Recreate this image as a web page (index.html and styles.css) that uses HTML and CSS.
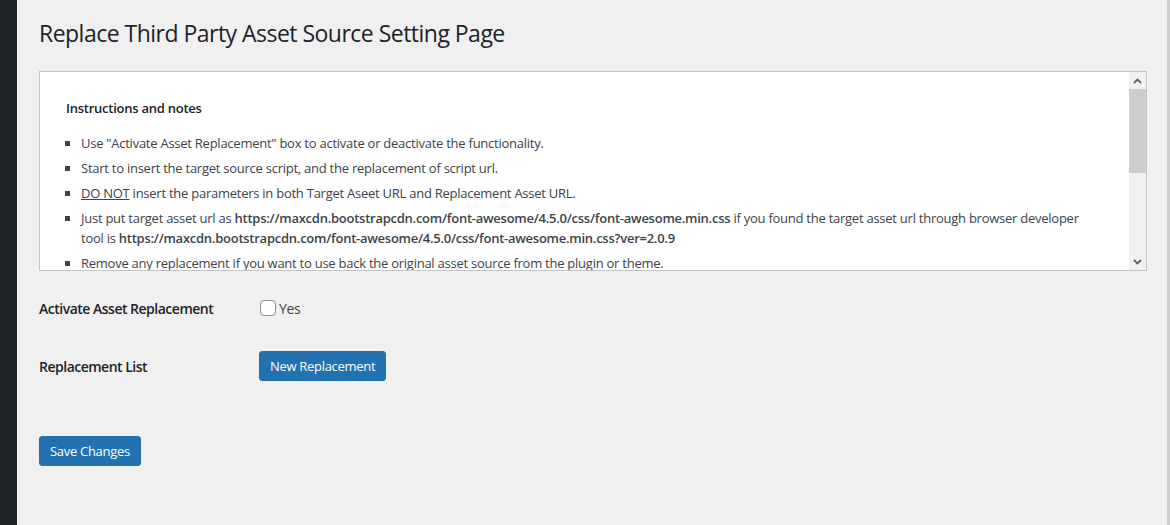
FILE: index.html
```html
<!DOCTYPE html>
<html lang="en">
<head>
<meta charset="utf-8">
<title>Replace Third Party Asset Source Setting Page</title>
<link rel="stylesheet" href="styles.css">
</head>
<body>
<div class="layout">
  <aside class="sidebar"></aside>
  <main class="main">
    <h1 class="page-title">Replace Third Party Asset Source Setting Page</h1>
    <div class="notes-box">
      <div class="notes-content">
        <h2 class="notes-title">Instructions and notes</h2>
        <ul class="notes-list">
          <li>Use "Activate Asset Replacement" box to activate or deactivate the functionality.</li>
          <li>Start to insert the target source script, and the replacement of script url.</li>
          <li><span class="u">DO NOT</span> insert the parameters in both Target Aseet URL and Replacement Asset URL.</li>
          <li>Just put target asset url as <b>https://maxcdn.bootstrapcdn.com/font-awesome/4.5.0/css/font-awesome.min.css</b> if you found the target asset url through browser developer tool is <b>https://maxcdn.bootstrapcdn.com/font-awesome/4.5.0/css/font-awesome.min.css?ver=2.0.9</b></li>
          <li>Remove any replacement if you want to use back the original asset source from the plugin or theme.</li>
        </ul>
      </div>
      <div class="scrollbar">
        <div class="sb-btn">
          <svg width="9" height="6" viewBox="0 0 9 6"><path d="M1 5 L4.5 1.5 L8 5" fill="none" stroke="#606060" stroke-width="1.8"/></svg>
        </div>
        <div class="sb-track">
          <div class="sb-thumb"></div>
        </div>
        <div class="sb-btn">
          <svg width="9" height="6" viewBox="0 0 9 6"><path d="M1 1 L4.5 4.5 L8 1" fill="none" stroke="#606060" stroke-width="1.8"/></svg>
        </div>
      </div>
    </div>

    <div class="form-table">
      <div class="form-row row-activate">
        <div class="form-label">Activate Asset Replacement</div>
        <label class="check-label"><input type="checkbox" class="checkbox"> Yes</label>
      </div>
      <div class="form-row row-list">
        <div class="form-label">Replacement List</div>
        <button class="button-primary" type="button">New Replacement</button>
      </div>
    </div>
    <div class="submit">
      <button class="button-primary" type="button">Save Changes</button>
    </div>
  </main>
  <div class="edge"></div>
</div>
</body>
</html>
```

FILE: styles.css
```css
* { box-sizing: border-box; }
html, body { margin: 0; padding: 0; height: 100%; }
body {
  background: #f0f0f1;
  font-family: "Open Sans", "Noto Sans", sans-serif;
  font-size: 13px;
  letter-spacing: -0.25px;
  color: #3c434a;
  overflow: hidden;
}
.layout { display: flex; height: 525px; }
.sidebar { width: 17px; flex: none; background: #1d2327; }
.edge { width: 3px; flex: none; background: #cdcdcd; }
.main { flex: 1; padding: 10px 20px 0 22px; min-width: 0; }
.page-title {
  margin: 0;
  padding: 9px 0 4px;
  font-size: 23px;
  font-weight: 400;
  line-height: 29px;
  letter-spacing: -0.52px;
  color: #1d2327;
}
.notes-box {
  margin-top: 19px;
  height: 200px;
  border: 1px solid #c3c4c7;
  background: #fff;
  display: flex;
  overflow: hidden;
}
.notes-content {
  flex: 1;
  padding: 26px 26px 0 26px;
  overflow: hidden;
}
.notes-title {
  margin: 0 0 15px;
  font-size: 13px;
  font-weight: 600;
  line-height: 20px;
  color: #1d2327;
}
.notes-list {
  margin: 0;
  padding-left: 15px;
  list-style: square;
}
.notes-list li {
  line-height: 20px;
  margin-bottom: 5px;
}
.notes-list b { font-weight: 600; }
.u { text-decoration: underline; }
.scrollbar {
  width: 17px;
  flex: none;
  background: #f1f1f1;
  display: flex;
  flex-direction: column;
}
.sb-btn {
  height: 17px;
  display: flex;
  align-items: center;
  justify-content: center;
}
.sb-track { flex: 1; }
.sb-thumb { height: 84px; background: #cdcdcd; }
.form-table { margin-top: 20px; }
.form-row { display: flex; align-items: center; }
.form-label {
  width: 220px;
  flex: none;
  font-size: 14px;
  font-weight: 600;
  letter-spacing: -0.5px;
  color: #1d2327;
}
.row-activate { height: 34px; }
.row-list { margin-top: 26px; height: 30px; }
.check-label {
  display: flex;
  align-items: center;
  gap: 3px;
  font-size: 14px;
  letter-spacing: -0.3px;
  color: #3c434a;
  margin-left: 1px;
}
.checkbox {
  appearance: none;
  -webkit-appearance: none;
  width: 16px;
  height: 16px;
  margin: 0;
  border: 1px solid #8c8f94;
  border-radius: 4px;
  background: #fff;
}
.button-primary {
  height: 30px;
  padding: 0 10px;
  border: 1px solid #2271b1;
  border-radius: 3px;
  background: #2271b1;
  color: #fff;
  font-family: inherit;
  font-size: 13px;
  letter-spacing: -0.3px;
  line-height: 28px;
}
.submit { margin-top: 55px; }
```
